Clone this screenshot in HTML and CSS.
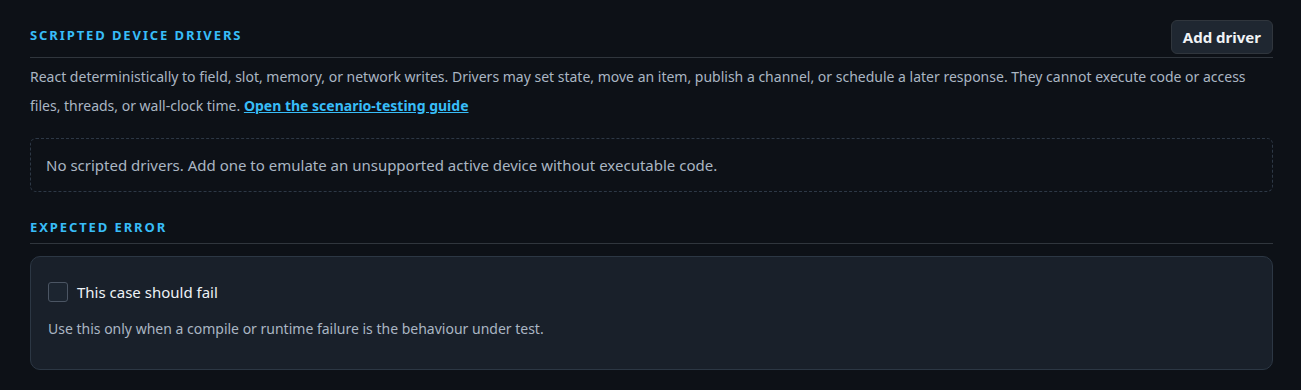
FILE: index.html
```html
<!DOCTYPE html>
<html lang="en">
<head>
    <meta charset="UTF-8">
    <title>Scenario</title>
    <link rel="stylesheet" href="styles.css">
</head>
<body>
    <div class="page">
        <section class="section">
            <div class="section-head">
                <h3 class="section-title">Scripted device drivers</h3>
                <button class="btn">Add driver</button>
            </div>
            <p class="section-desc">
                React deterministically to field, slot, memory, or network writes. Drivers may set state, move an item, publish a channel, or schedule a later response. They cannot execute code or access files, threads, or wall-clock time.
                <a href="#" class="link">Open the scenario-testing guide</a>
            </p>
            <div class="empty">No scripted drivers. Add one to emulate an unsupported active device without executable code.</div>
        </section>
        <section class="section">
            <div class="section-head">
                <h3 class="section-title">Expected error</h3>
            </div>
            <div class="card">
                <label class="check">
                    <input type="checkbox">
                    <span class="check-box"></span>
                    <span>This case should fail</span>
                </label>
                <p class="hint">Use this only when a compile or runtime failure is the behaviour under test.</p>
            </div>
        </section>
    </div>
</body>
</html>
```

FILE: styles.css
```css
html, body {
    margin: 0;
    background: #0d1117;
}
.page {
    padding: 20px 28px 0 30px;
    font-family: "Noto Sans", "Open Sans", sans-serif;
    color: #aab6c3;
}
.section-head {
    display: flex;
    justify-content: space-between;
    align-items: flex-start;
    border-bottom: 1px solid #30363d;
    padding-bottom: 3px;
}
.section-title {
    margin: 6px 0 4px;
    font-size: 13px;
    line-height: 18px;
    font-weight: 700;
    letter-spacing: 1.9px;
    text-transform: uppercase;
    color: #38bdf8;
}
.btn {
    font-family: inherit;
    font-size: 15px;
    font-weight: 700;
    color: #f0f3f6;
    background: #1f2731;
    border: 1px solid #30363d;
    border-radius: 6px;
    padding: 6px 11px;
    height: 34px;
}
.section-desc {
    margin: 4px 0 0;
    font-size: 14px;
    line-height: 29px;
}
.link {
    color: #38bdf8;
    font-weight: 700;
}
.empty {
    margin-top: 18px;
    border: 1px dashed #2d3846;
    border-radius: 6px;
    padding: 16px 15px;
    font-size: 15px;
    line-height: 20px;
}
.section + .section {
    margin-top: 20px;
}
.card {
    margin-top: 12px;
    background: #19202a;
    border: 1px solid #2c3744;
    border-radius: 10px;
    padding: 25px 17px 30px;
}
.check {
    display: flex;
    align-items: center;
    gap: 9px;
    font-size: 15px;
    color: #eef2f6;
}
.check input {
    display: none;
}
.check-box {
    width: 18px;
    height: 18px;
    border: 1px solid #4b5563;
    border-radius: 3px;
    background: #1c2530;
}
.hint {
    margin: 17px 0 0;
    font-size: 14px;
    line-height: 20px;
}
```
